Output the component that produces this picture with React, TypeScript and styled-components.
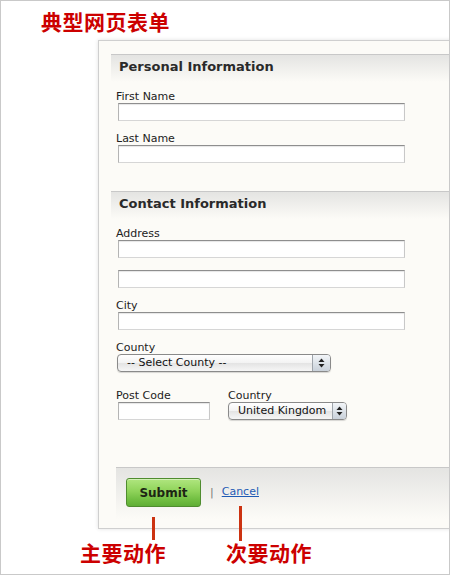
import React from 'react';
import styled, { createGlobalStyle } from 'styled-components';

const Global = createGlobalStyle`
  html, body { margin: 0; padding: 0; background: #fff; }
  * { box-sizing: border-box; }
`;

const Frame = styled.div`
  position: relative;
  width: 450px;
  height: 575px;
  border: 1px solid #c9c9c9;
  overflow: hidden;
  background: #fff;
  display: flex;
  flex-direction: column;
  font-family: "DejaVu Sans", Verdana, sans-serif;
  color: #222;
`;

const Title = styled.h1`
  margin: 0;
  height: 39px;
  flex-shrink: 0;
  padding: 8px 0 0 40px;
  font-family: "Noto Sans CJK SC", sans-serif;
  font-weight: 700;
  font-size: 21px;
  line-height: 24px;
  letter-spacing: 0.5px;
  color: #cc0000;
`;

const Card = styled.div`
  margin-left: 97px;
  width: 400px;
  height: 489px;
  flex-shrink: 0;
  background: #fcfbf7;
  border: 1px solid #cfcfcf;
  box-shadow: 0 0 4px rgba(0, 0, 0, 0.12);
  padding: 13px 0 0 12px;
  display: flex;
  flex-direction: column;
`;

const Section = styled.section``;

const SectionHeader = styled.h2`
  margin: 0;
  height: 28px;
  border-top: 1px solid #c8c8c8;
  background: linear-gradient(#e4e4e2, #fcfbf7);
  padding-left: 8px;
  font-size: 13px;
  font-weight: 700;
  line-height: 24px;
  color: #2a2a2a;
`;

const SectionBody = styled.div<{ $bottom: number }>`
  display: flex;
  flex-direction: column;
  gap: 9px;
  padding: 6px 0 ${(p) => p.$bottom}px 5px;
`;

const Field = styled.div`
  display: flex;
  flex-direction: column;
`;

const Label = styled.label`
  display: block;
  font-size: 11px;
  line-height: 13px;
  padding-top: 2px;
  color: #222;
`;

const TextInput = styled.input<{ $w: number; $gap?: number }>`
  display: block;
  width: ${(p) => p.$w}px;
  height: 18px;
  margin: ${(p) => p.$gap ?? 0}px 0 0 2px;
  padding: 0 3px;
  border: 1px solid;
  border-color: #8e8e8e #c8c8c8 #d6d6d6 #b4b4b4;
  background: #fff;
  box-shadow: inset 0 1px 1px rgba(0, 0, 0, 0.1);
  font: 11px "DejaVu Sans", sans-serif;
`;

const SelectBox = styled.div<{ $w: number; $ml: number }>`
  display: flex;
  width: ${(p) => p.$w}px;
  height: 18px;
  margin-left: ${(p) => p.$ml}px;
  border: 1px solid #8a8a8a;
  border-radius: 4px;
  overflow: hidden;
  background: linear-gradient(#ffffff, #f3f3f3 50%, #e4e4e4 52%, #f6f6f6);
  box-shadow: 0 1px 1px rgba(0, 0, 0, 0.15);
  font-size: 11px;
  color: #111;
`;

const SelectText = styled.span`
  flex: 1;
  padding-left: 9px;
  line-height: 16px;
  white-space: nowrap;
`;

const ArrowBox = styled.span<{ $w: number }>`
  width: ${(p) => p.$w}px;
  border-left: 1px solid #9ea4ab;
  background: linear-gradient(#f2f5f8, #c9d1da);
  display: flex;
  align-items: center;
  justify-content: center;
`;

const Row = styled.div`
  display: flex;
  margin-top: 6px;
`;

const Col = styled.div<{ $w?: number }>`
  display: flex;
  flex-direction: column;
  width: ${(p) => (p.$w ? `${p.$w}px` : 'auto')};
`;

const Footer = styled.div`
  flex: 1;
  margin-left: 5px;
  border-top: 1px solid #c8c8c8;
  background: linear-gradient(#e4e4e2, #fcfbf7 85%);
  padding: 10px 0 0 10px;
  display: flex;
  align-items: flex-start;
`;

const SubmitButton = styled.button`
  width: 75px;
  height: 29px;
  border: 1px solid #4f8c2f;
  border-radius: 3px;
  background: linear-gradient(#b0e67f, #8fd35a 45%, #72bf42 75%, #5fae35);
  box-shadow: inset 0 1px 0 rgba(255, 255, 255, 0.45);
  font: 700 12px "DejaVu Sans", sans-serif;
  color: #1d2614;
  padding: 0;
  cursor: pointer;
`;

const Separator = styled.span`
  margin: 0 8px 0 9px;
  font-size: 11px;
  line-height: 29px;
  color: #777;
`;

const CancelLink = styled.a`
  font-size: 11px;
  line-height: 27px;
  color: #1f5bb5;
  text-decoration: underline;
`;

const Pointer = styled.div<{ $left: number; $top: number; $h: number }>`
  position: absolute;
  left: ${(p) => p.$left}px;
  top: ${(p) => p.$top}px;
  width: 3px;
  height: ${(p) => p.$h}px;
  background: #cc3311;
`;

const Note = styled.div<{ $left: number }>`
  position: absolute;
  left: ${(p) => p.$left}px;
  top: 539px;
  font-family: "Noto Sans CJK SC", sans-serif;
  font-weight: 700;
  font-size: 21px;
  line-height: 24px;
  letter-spacing: 0.5px;
  color: #cc0000;
  white-space: nowrap;
`;

const Arrows = () => (
  <svg width="7" height="10" viewBox="0 0 7 10">
    <path d="M3.5 0.5 L6.5 4 L0.5 4 Z" fill="#222" />
    <path d="M3.5 9.5 L6.5 6 L0.5 6 Z" fill="#222" />
  </svg>
);

const Select = ({ text, w, arrowW, ml }: { text: string; w: number; arrowW: number; ml: number }) => (
  <SelectBox $w={w} $ml={ml}>
    <SelectText>{text}</SelectText>
    <ArrowBox $w={arrowW}>
      <Arrows />
    </ArrowBox>
  </SelectBox>
);

export default function App() {
  return (
    <>
      <Global />
      <Frame>
        <Title>典型网页表单</Title>
        <Card>
          <Section>
            <SectionHeader>Personal Information</SectionHeader>
            <SectionBody $bottom={28}>
              <Field>
                <Label>First Name</Label>
                <TextInput $w={287} />
              </Field>
              <Field>
                <Label>Last Name</Label>
                <TextInput $w={287} />
              </Field>
            </SectionBody>
          </Section>
          <Section>
            <SectionHeader>Contact Information</SectionHeader>
            <SectionBody $bottom={47}>
              <Field>
                <Label>Address</Label>
                <TextInput $w={287} />
                <TextInput $w={287} $gap={12} />
              </Field>
              <Field>
                <Label>City</Label>
                <TextInput $w={287} />
              </Field>
              <Field>
                <Label>County</Label>
                <Select text="-- Select County --" w={214} arrowW={18} ml={1} />
              </Field>
              <Row>
                <Col $w={112}>
                  <Label>Post Code</Label>
                  <TextInput $w={92} />
                </Col>
                <Col>
                  <Label>Country</Label>
                  <Select text="United Kingdom" w={119} arrowW={14} ml={0} />
                </Col>
              </Row>
            </SectionBody>
          </Section>
          <Footer>
            <SubmitButton>Submit</SubmitButton>
            <Separator>|</Separator>
            <CancelLink href="#">Cancel</CancelLink>
          </Footer>
        </Card>
        <Pointer $left={151} $top={516} $h={23} />
        <Pointer $left={238} $top={505} $h={35} />
        <Note $left={79}>主要动作</Note>
        <Note $left={225}>次要动作</Note>
      </Frame>
    </>
  );
}
